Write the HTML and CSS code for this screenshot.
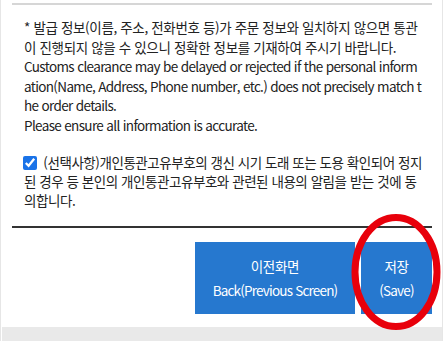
FILE: index.html
```html
<!DOCTYPE html>
<html lang="ko">
<head>
<meta charset="utf-8">
<link rel="stylesheet" href="styles.css">
</head>
<body>
<div class="page">
  <div class="content">
    <section class="notice">
      <p class="notice-text">* 발급 정보(이름, 주소, 전화번호 등)가 주문 정보와 일치하지 않으면 통관이 진행되지 않을 수 있으니 정확한 정보를 기재하여 주시기 바랍니다.<br><span class="en">Customs clearance may be delayed or rejected if the personal information(Name, Address, Phone number, etc.) does not precisely match the order details.<br>Please ensure all information is accurate.</span></p>
      <label class="consent">
        <input type="checkbox" class="consent-check" checked>
        (선택사항)개인통관고유부호의 갱신 시기 도래 또는 도용 확인되어 정지된 경우 등 본인의 개인통관고유부호와 관련된 내용의 알림을 받는 것에 동의합니다.
      </label>
    </section>
    <div class="actions">
      <button class="btn btn-back">이전화면<br><span class="btn-en">Back(Previous Screen)</span></button>
      <button class="btn btn-save">저장<br><span class="btn-en">(Save)</span></button>
      <svg class="mark" width="90" height="116" viewBox="0 0 90 116" aria-hidden="true">
        <ellipse cx="45" cy="58" rx="41" ry="54.5" fill="none" stroke="#e8000b" stroke-width="7"/>
      </svg>
    </div>
  </div>
  <div class="footer-strip"></div>
</div>
</body>
</html>
```

FILE: styles.css
```css
html, body {
  margin: 0;
  padding: 0;
  background: #ffffff;
}

body {
  font-family: "Noto Sans CJK KR", "Noto Sans", sans-serif;
  font-size: 13.5px;
  letter-spacing: -0.35px;
  color: #222222;
}

.page {
  width: 443px;
  height: 341px;
  box-sizing: border-box;
  border-left: 1px solid #e6e6e6;
  border-right: 1px solid #e6e6e6;
  display: flex;
  flex-direction: column;
  overflow: hidden;
}

.content {
  flex: 1;
  padding: 3px 10px 0 11px;
}

.notice {
  border-top: 2px solid #d6d6d6;
  border-bottom: 2px solid #333333;
  padding: 13px 10px 16px 12px;
}

.notice-text {
  margin: 0;
  line-height: 19.5px;
  word-break: break-all;
}

.en {
  letter-spacing: -0.65px;
}

.consent {
  display: block;
  margin-top: 18px;
  line-height: 19px;
  letter-spacing: -0.45px;
  word-break: break-all;
}

.consent-check {
  width: 14px;
  height: 14px;
  margin: 0 3px 0 -1px;
  vertical-align: -2px;
  accent-color: #1a73e8;
}

.actions {
  position: relative;
  display: flex;
  justify-content: flex-end;
  gap: 6px;
  padding: 14px 0 0;
}

.btn {
  font-family: inherit;
  font-size: 13.5px;
  letter-spacing: -0.3px;
  line-height: 24px;
  color: #ffffff;
  background: #2678cf;
  border: 0;
  border-radius: 0;
  padding: 12px 0;
  height: 72px;
  text-align: center;
}

.btn-back {
  width: 160px;
}

.btn-save {
  width: 71px;
}

.btn-en {
  letter-spacing: -0.8px;
}

.mark {
  position: absolute;
  right: -9px;
  top: -14px;
}

.footer-strip {
  height: 14px;
  margin-left: 1px;
  background: #e9e9e9;
}
```
